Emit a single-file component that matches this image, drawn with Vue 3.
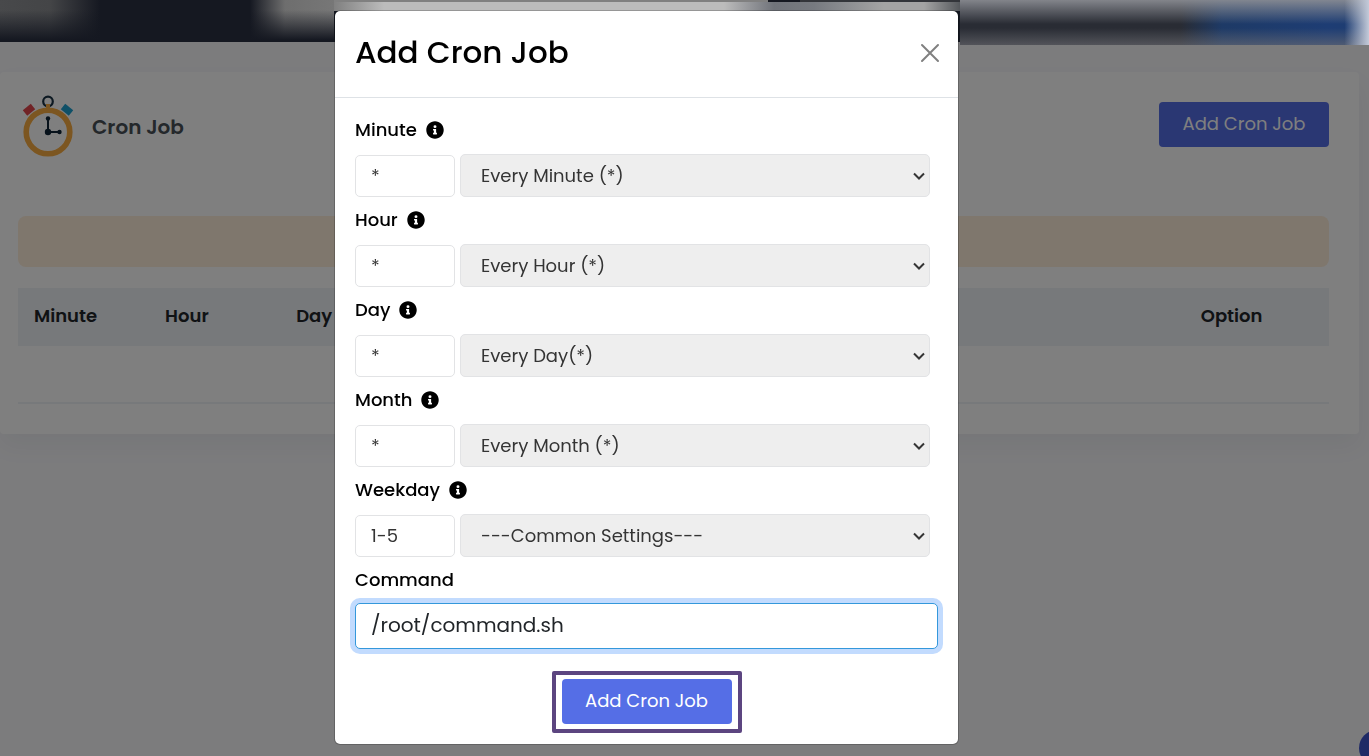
<script setup>
import { onMounted, reactive, ref } from 'vue';

const columns = ['Minute', 'Hour', 'Day', 'Month', 'Weekday', 'Command', 'Option'];

const fields = reactive([
  { key: 'minute', label: 'Minute', value: '*', option: 'Every Minute (*)' },
  { key: 'hour', label: 'Hour', value: '*', option: 'Every Hour (*)' },
  { key: 'day', label: 'Day', value: '*', option: 'Every Day(*)' },
  { key: 'month', label: 'Month', value: '*', option: 'Every Month (*)' },
  { key: 'weekday', label: 'Weekday', value: '1-5', option: '---Common Settings---' },
]);

const command = ref('/root/command.sh');
const isOpen = ref(true);

onMounted(() => {
  document.title = 'Cron Job';
});
</script>

<template>
  <div class="page">
    <header class="topbar" aria-hidden="true">
      <div class="topbar-left"></div>
      <div class="topbar-middle"></div>
      <div class="topbar-right"></div>
    </header>

    <main class="card">
      <div class="card-head">
        <svg class="clock" viewBox="0 0 52 62" fill="none" aria-hidden="true">
          <circle cx="26" cy="6.500" r="4.800" stroke="#1b3344" stroke-width="2.200" />
          <path d="M3 18 11 11.500" stroke="#e2474d" stroke-width="7" />
          <path d="M49 18 41 11.500" stroke="#1fa0cf" stroke-width="7" />
          <path d="M26 9v5" stroke="#f9ad43" stroke-width="4" />
          <circle cx="26" cy="37" r="21.800" stroke="#f9ad43" stroke-width="5.600" />
          <path d="M26 23.500V37h11.500" stroke="#0f2537" stroke-width="2" />
          <circle cx="26" cy="23.500" r="2.200" fill="#0f2537" />
          <circle cx="37.500" cy="37" r="2.200" fill="#0f2537" />
          <circle cx="26" cy="37" r="3.200" fill="#0f2537" />
        </svg>
        <h4>Cron Job</h4>
        <button type="button" class="btn" @click="isOpen = true">Add Cron Job</button>
      </div>

      <div class="notice"></div>

      <table class="jobs">
        <thead>
          <tr>
            <th v-for="column in columns" :key="column" :class="column.toLowerCase()" scope="col">
              {{ column }}
            </th>
          </tr>
        </thead>
        <tbody>
          <tr>
            <td :colspan="columns.length"></td>
          </tr>
        </tbody>
      </table>
    </main>

    <span class="bubble" aria-hidden="true"></span>

    <div v-if="isOpen" class="backdrop"></div>

    <div v-if="isOpen" class="modal-wrap">
      <section class="modal" role="dialog" aria-labelledby="modal-title">
        <div class="modal-head">
          <h2 id="modal-title">Add Cron Job</h2>
          <button type="button" class="close" aria-label="Close" @click="isOpen = false">
            <svg viewBox="0 0 20 20" fill="none" aria-hidden="true">
              <path d="m2 2 16 16M18 2 2 18" stroke="currentColor" stroke-width="2" stroke-linecap="round" />
            </svg>
          </button>
        </div>

        <form class="modal-body" @submit.prevent>
          <div v-for="field in fields" :key="field.key" class="field">
            <div class="label-row">
              <label :for="field.key">{{ field.label }}</label>
              <svg class="info" viewBox="0 0 512 512" aria-hidden="true">
                <path
                  fill="currentColor"
                  d="M256 8C119 8 8 119 8 256s111 248 248 248 248-111 248-248S393 8 256 8zm0 110a42 42 0 1 1 0 84 42 42 0 0 1 0-84zm56 254c0 7-5 12-12 12h-88c-7 0-12-5-12-12v-24c0-7 5-12 12-12h12v-64h-12c-7 0-12-5-12-12v-24c0-7 5-12 12-12h64c7 0 12 5 12 12v100h12c7 0 12 5 12 12v24z"
                />
              </svg>
            </div>
            <div class="inputs">
              <input :id="field.key" v-model="field.value" type="text" class="value" />
              <div class="preset-wrap">
                <select :aria-label="`${field.label} settings`" class="preset">
                  <option>{{ field.option }}</option>
                </select>
                <svg class="chevron" viewBox="0 0 12 8" fill="none" aria-hidden="true">
                  <path d="m1 1.500 5 5 5-5" stroke="currentColor" stroke-width="2" />
                </svg>
              </div>
            </div>
          </div>

          <div class="command-field">
            <label for="command">Command</label>
            <input id="command" v-model="command" type="text" class="command-input" />
          </div>

          <div class="submit-frame">
            <button type="submit" class="btn">Add Cron Job</button>
          </div>
        </form>
      </section>
    </div>
  </div>
</template>

<style>
body {
  margin: 0;
  background: #f8f8fb;
}
</style>

<style scoped>
* {
  box-sizing: border-box;
}

.page {
  min-height: 100vh;
  overflow: hidden;
  background: #f8f8fb;
  color: #212529;
  font-family: Poppins, Inter, "Liberation Sans", sans-serif;
  font-size: 18px;
}

button,
input,
select {
  font-family: inherit;
}

/* the bar stays above the backdrop, so its colours are already dimmed */
.topbar {
  position: relative;
  z-index: 11;
  display: grid;
  grid-template-columns: 334px 626px 1fr;
  align-items: start;
  height: 42px;
  background: #151821;
}

.topbar-left {
  height: 40px;
  background:
    linear-gradient(to bottom, transparent 25%, #151821 100%),
    linear-gradient(to right, #48494b 0, #444547 50px, #151821 100px, #151821 250px, #6e6e6e 285px, #777 334px);
}

.topbar-middle {
  height: 42px;
  background:
    linear-gradient(#808080, #808080) 0 0 / 434px 2px no-repeat,
    linear-gradient(#33353a, #33353a) 466px 0 / 160px 2px no-repeat,
    linear-gradient(to right, #808080 0, #bcbcbc 50px, #bcbcbc 390px, #70737a 440px, #777a80 480px, #a4a4a4 550px, #a4a4a4 590px, #55585c 626px) 0 2px / 100% 9px no-repeat;
}

.topbar-right {
  height: 45px;
  background:
    linear-gradient(to right, transparent 94%, #c3cad9 100%),
    linear-gradient(to bottom, rgba(140, 142, 148, 0.9) 0, rgba(140, 142, 148, 0) 24px, rgba(110, 110, 115, 0) 28px, rgba(110, 110, 115, 0.6) 45px),
    linear-gradient(to right, #292c34 0, #292c34 54%, #1e3a66 64%, #1e3d74 90%, #1e3d70 100%);
}

.card {
  margin: 30px 10px 0 0;
  padding: 23px 30px 30px 18px;
  border-radius: 4px;
  background: #fff;
  box-shadow: 0 12px 24px rgba(18, 38, 63, 0.05);
}

.card-head {
  display: flex;
  align-items: center;
  height: 62px;
  margin-bottom: 59px;
  padding-left: 4px;
}

.clock {
  width: 52px;
  height: 62px;
}

.card-head h4 {
  margin: 2px auto 0 18px;
  color: #495057;
  font-size: 20px;
  font-weight: 600;
}

.btn {
  width: 170px;
  height: 45px;
  padding: 0 0 2px;
  border: 0;
  border-radius: 4px;
  background: #556ee6;
  color: #fff;
  font-size: 18px;
  font-weight: 400;
}

.card-head .btn {
  margin-bottom: 4px;
}

.notice {
  height: 51px;
  margin-bottom: 21px;
  border-radius: 8px;
  background: #ffeedb;
}

.jobs {
  width: 100%;
  border-collapse: collapse;
  table-layout: fixed;
}

.jobs th {
  width: 10%;
  height: 58px;
  padding: 0 16px 4px;
  background: #eff2f7;
  font-size: 18px;
  font-weight: 600;
  text-align: left;
}

.jobs th.command {
  width: 39%;
}

.jobs th.option {
  width: 11%;
}

.jobs td {
  height: 57px;
  border-bottom: 2px solid #eff2f7;
}

.bubble {
  position: fixed;
  right: -26px;
  bottom: -10px;
  width: 36px;
  height: 36px;
  border-radius: 50%;
  background: #3f55cc;
}

.backdrop {
  position: fixed;
  inset: 0;
  z-index: 10;
  background: rgba(0, 0, 0, 0.5);
}

.modal-wrap {
  position: fixed;
  inset: 0;
  z-index: 12;
  padding: 10px 76px 10px 0;
  overflow: auto;
}

.modal {
  max-width: 625px;
  margin: 0 auto;
  border: 1px solid rgba(0, 0, 0, 0.2);
  border-radius: 6px;
  background: #fff;
  background-clip: padding-box;
  color: #000;
}

.modal-head {
  display: flex;
  align-items: center;
  justify-content: space-between;
  height: 87px;
  padding: 0 18px 4px 20px;
  border-bottom: 1px solid #dee2e6;
}

.modal-head h2 {
  margin: 0;
  font-size: 31px;
  font-weight: 500;
  line-height: 40px;
}

.close {
  display: flex;
  margin-top: 2px;
  padding: 0;
  border: 0;
  background: none;
  color: #808080;
}

.close svg {
  width: 20px;
  height: 20px;
}

.modal-body {
  display: flex;
  flex-direction: column;
  padding: 19px 20px 11px;
}

.field {
  margin-bottom: 10px;
}

.label-row {
  display: flex;
  align-items: center;
  gap: 9px;
  margin-bottom: 11px;
}

label {
  font-size: 18px;
  font-weight: 500;
  line-height: 26px;
}

.info {
  width: 18px;
  height: 18px;
}

.inputs {
  display: flex;
  align-items: flex-end;
  gap: 5px;
  padding-right: 8px;
}

.value,
.preset {
  border: 1px solid #e2e3e5;
  border-radius: 5px;
  color: #343434;
  font-size: 18px;
}

.value {
  width: 100px;
  height: 42px;
  padding: 0 15px 2px;
  background: #fff;
}

.preset-wrap {
  position: relative;
  flex: 1;
  min-width: 0;
}

.preset {
  display: block;
  width: 100%;
  height: 43px;
  padding: 0 24px 1px 20px;
  background: #eee;
  appearance: none;
}

.chevron {
  position: absolute;
  top: 18px;
  right: 5px;
  width: 12px;
  height: 8px;
  color: #343434;
  pointer-events: none;
}

.command-field {
  display: flex;
  flex-direction: column;
  gap: 10px;
  margin-bottom: 22px;
}

.command-input {
  width: 100%;
  height: 46px;
  padding: 0 15px 2px;
  border: 1px solid #3498db;
  border-radius: 5px;
  outline: 0;
  box-shadow: 0 0 0 5px #c2dbfe;
  color: #212529;
  font-size: 20px;
}

.submit-frame {
  align-self: center;
  padding: 4px 6px 5px;
  border: 4px solid #5c4580;
  border-radius: 2px;
  line-height: 0;
}
</style>
